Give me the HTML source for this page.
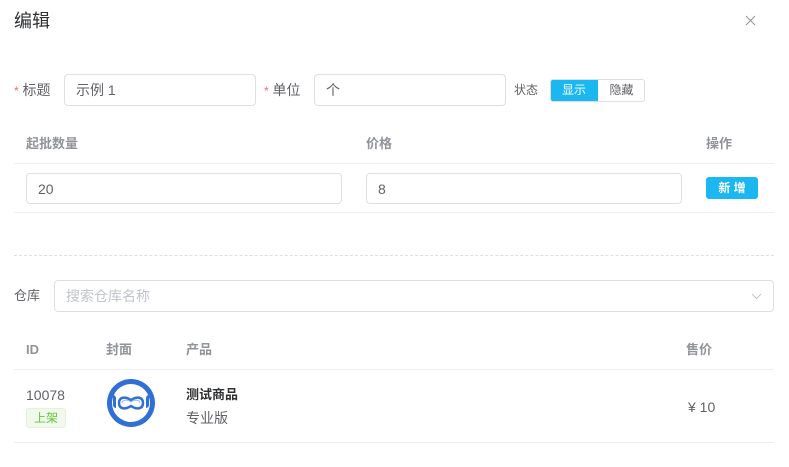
<!DOCTYPE html>
<html><head><meta charset="utf-8"><style>
*{box-sizing:border-box;margin:0;padding:0}
body{width:789px;height:467px;background:#fff;font-family:"Liberation Sans","Noto Sans CJK SC",sans-serif;color:#606266;position:relative;overflow:hidden;font-size:13px}
.a{position:absolute;white-space:nowrap;line-height:20px;height:20px}
.inp{position:absolute;border:1px solid #dcdfe6;border-radius:4px;background:#fff;padding-left:11px;display:flex;align-items:center;font-size:14px;color:#606266;line-height:20px}
.star{color:#f56c6c}
.th{font-weight:bold;color:#909399;font-size:13px}
.line{position:absolute;left:14px;width:760px;height:1px;background:#ebeef5}
</style></head><body>
<div class="a" style="left:14px;top:9px;font-size:18px;color:#303133;line-height:24px;height:24px">编辑</div>
<svg class="a" style="left:745px;top:15px;height:11px" width="11" height="11" viewBox="0 0 11 11"><path d="M1 1L10 10M10 1L1 10" stroke="#909399" stroke-width="1"/></svg>

<div class="a" style="left:14px;top:80px;font-size:14px"><span class="star" style="font-size:12px">*</span> 标题</div>
<div class="inp" style="left:64px;top:74px;width:192px;height:32px">示例 1</div>
<div class="a" style="left:264px;top:80px;font-size:14px"><span class="star" style="font-size:12px">*</span> 单位</div>
<div class="inp" style="left:314px;top:74px;width:192px;height:32px">个</div>
<div class="a" style="left:514px;top:80px;font-size:12px">状态</div>
<div class="a" style="left:550px;top:79px;width:95px;height:23px;border:1px solid #dcdfe6;border-radius:3px;overflow:hidden;font-size:12px">
<div class="a" style="left:-1px;top:-1px;width:48px;height:23px;background:#1ab7f0;color:#fff;text-align:center;line-height:23px">显示</div>
<div class="a" style="left:47px;top:0;width:47px;height:21px;text-align:center;line-height:21px">隐藏</div></div>

<div class="a th" style="left:26px;top:134px">起批数量</div>
<div class="a th" style="left:366px;top:134px">价格</div>
<div class="a th" style="left:706px;top:134px">操作</div>
<div class="line" style="top:163px"></div>
<div class="inp" style="left:26px;top:173px;width:316px;height:31px">20</div>
<div class="inp" style="left:366px;top:173px;width:316px;height:31px">8</div>
<div class="a" style="left:706px;top:177px;width:52px;height:22px;background:#1ab7f0;color:#fff;border-radius:3px;text-align:center;line-height:22px;font-size:12px;font-weight:bold">新 增</div>
<div class="line" style="top:212px"></div>

<div class="a" style="left:14px;top:255px;width:760px;height:1px;border-top:1px dashed #dcdfe6"></div>

<div class="a" style="left:14px;top:286px">仓库</div>
<div class="inp" style="left:54px;top:280px;width:720px;height:32px;color:#c0c4cc">搜索仓库名称</div>
<svg class="a" style="left:751px;top:293px;height:7px" width="11" height="7" viewBox="0 0 11 7"><path d="M1 1L5.5 5.5L10 1" stroke="#c0c4cc" fill="none"/></svg>

<div class="a th" style="left:26px;top:340px">ID</div>
<div class="a th" style="left:106px;top:340px">封面</div>
<div class="a th" style="left:186px;top:340px">产品</div>
<div class="a th" style="left:686px;top:340px">售价</div>
<div class="line" style="top:369px"></div>
<div class="a" style="left:26px;top:385px;font-size:14px">10078</div>
<div class="a" style="left:26px;top:408px;width:40px;height:20px;background:#f0f9eb;border:1px solid #e1f3d8;border-radius:3px;color:#67c23a;font-size:12px;text-align:center;line-height:18px">上架</div>
<svg class="a" style="left:107px;top:379px;height:48px" width="48" height="48" viewBox="0 0 48 48"><circle cx="24" cy="24" r="24" fill="#2f6fd6"/><circle cx="24" cy="24" r="19" fill="#fff"/><path d="M6 16a3 3 0 0 1 3 3v10a3 3 0 0 1-3-3z M42 16a3 3 0 0 0-3 3v10a3 3 0 0 0 3-3z" fill="#2f6fd6"/><path d="M12 24c0-6 6-7 12-3c6-4 12-3 12 3s-6 7-12 3c-6 4-12 3-12-3z" fill="none" stroke="#2f6fd6" stroke-width="2.5"/><path d="M15 24c0-3 5-4 9-1c4-3 9-2 9 1" fill="none" stroke="#9bbaf0" stroke-width="1"/></svg>
<div class="a" style="left:186px;top:385px;font-weight:bold;color:#303133">测试商品</div>
<div class="a" style="left:186px;top:408px;font-size:14px">专业版</div>
<div class="a" style="left:688px;top:397px;font-size:14px">¥ 10</div>
<div class="line" style="top:442px"></div>
</body></html>
